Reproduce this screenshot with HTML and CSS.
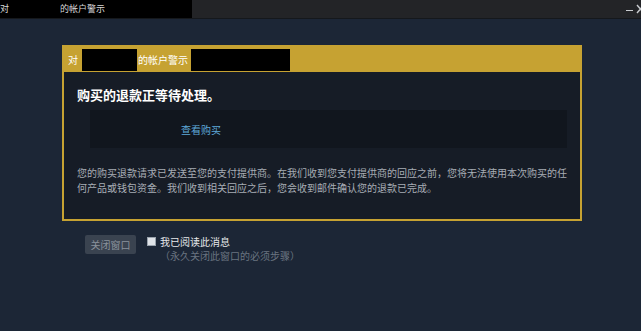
FILE: index.html
```html
<!DOCTYPE html>
<html lang="zh">
<head>
<meta charset="utf-8">
<link rel="stylesheet" href="styles.css">
</head>
<body>
<div class="titlebar">
  <div class="title-black">
    <span class="t-first">对</span><span class="t-gap"></span><span class="t-name">的帐户警示</span>
  </div>
  <div class="controls">
    <span class="min"></span>
    <svg class="close" width="8" height="10" viewBox="0 0 8 10"><path d="M1 1 L8 9 M8 1 L1 9" stroke="#c9ccd0" stroke-width="1.4"/></svg>
  </div>
</div>
<div class="page">
  <div class="alert">
    <div class="alert-head">
      <span>对</span><span class="redact r1"></span><span>的帐户警示</span><span class="redact r2"></span>
    </div>
    <div class="alert-body">
      <h1 class="heading">购买的退款正等待处理。</h1>
      <div class="linkbox"><a class="link">查看购买</a></div>
      <p class="desc">您的购买退款请求已发送至您的支付提供商。在我们收到您支付提供商的回应之前，您将无法使用本次购买的任<br>何产品或钱包资金。我们收到相关回应之后，您会收到邮件确认您的退款已完成。</p>
    </div>
  </div>
  <div class="actions">
    <button class="btn">关闭窗口</button>
    <div class="check">
      <span class="box"></span>
      <div class="labels">
        <div class="lbl">我已阅读此消息</div>
        <div class="sub">（永久关闭此窗口的必须步骤）</div>
      </div>
    </div>
  </div>
</div>
</body>
</html>
```
FILE: styles.css
```css
html, body {
  margin: 0;
  padding: 0;
  background: #1c2636;
  font-family: "Noto Sans CJK SC", "Noto Sans", sans-serif;
  width: 641px;
  height: 331px;
  overflow: hidden;
}
.titlebar {
  height: 18px;
  background: #232427;
  display: flex;
  justify-content: space-between;
  border-bottom: 1px solid #15181c;
}
.title-black {
  width: 192px;
  background: #000;
  display: flex;
  align-items: center;
  color: #d8d8d8;
  font-size: 9px;
  line-height: 18px;
}
.t-first { margin-left: 0; }
.t-gap { width: 51px; }
.controls {
  display: flex;
  align-items: center;
  gap: 3px;
}
.min {
  width: 7px;
  height: 1px;
  background: #c9ccd0;
  margin-top: 3px;
}
.close { margin-right: -3px; }
.page {
  padding: 26px 0 0 62px;
}
.alert {
  width: 516px;
  border: 2px solid #c6a232;
  background: #161c26;
}
.alert-head {
  height: 25px;
  background: #c6a232;
  display: flex;
  align-items: center;
  color: #fff;
  font-size: 10px;
  padding-left: 4px;
}
.redact {
  background: #000;
  height: 22px;
  display: inline-block;
}
.r1 { width: 55px; margin-left: 4px; margin-right: 1px; }
.r2 { width: 99px; margin-left: 3px; }
.alert-body {
  padding: 13px 13px 24px 13px;
}
.heading {
  margin: 0;
  color: #fff;
  font-size: 13px;
  font-weight: bold;
  line-height: 20px;
}
.linkbox {
  margin: 5px 0 0 13px;
  height: 38px;
  background: #11161e;
  display: flex;
  align-items: center;
  padding-left: 91px;
}
.link {
  color: #5ea8d8;
  font-size: 10px;
}
.desc {
  margin: 17px -6px 0 0;
  color: #a7adb5;
  font-size: 10px;
  line-height: 15px;
  white-space: nowrap;
}
.actions {
  display: flex;
  align-items: flex-start;
  margin: 14px 0 0 23px;
}
.btn {
  width: 51px;
  height: 19px;
  background: #3a4350;
  border: none;
  border-radius: 2px;
  color: #8a929c;
  font-family: inherit;
  font-size: 10px;
  padding: 0;
}
.check {
  display: flex;
  margin-left: 11px;
}
.box {
  width: 9px;
  height: 9px;
  background: #dfe3e8;
  border: 1px solid #9aa3ad;
  margin-top: 2px;
  box-sizing: border-box;
}
.labels { margin-left: 4px; }
.lbl {
  color: #e6e8ea;
  font-size: 10px;
  line-height: 14px;
}
.sub {
  color: #6a7480;
  font-size: 10px;
  line-height: 13px;
}
```
